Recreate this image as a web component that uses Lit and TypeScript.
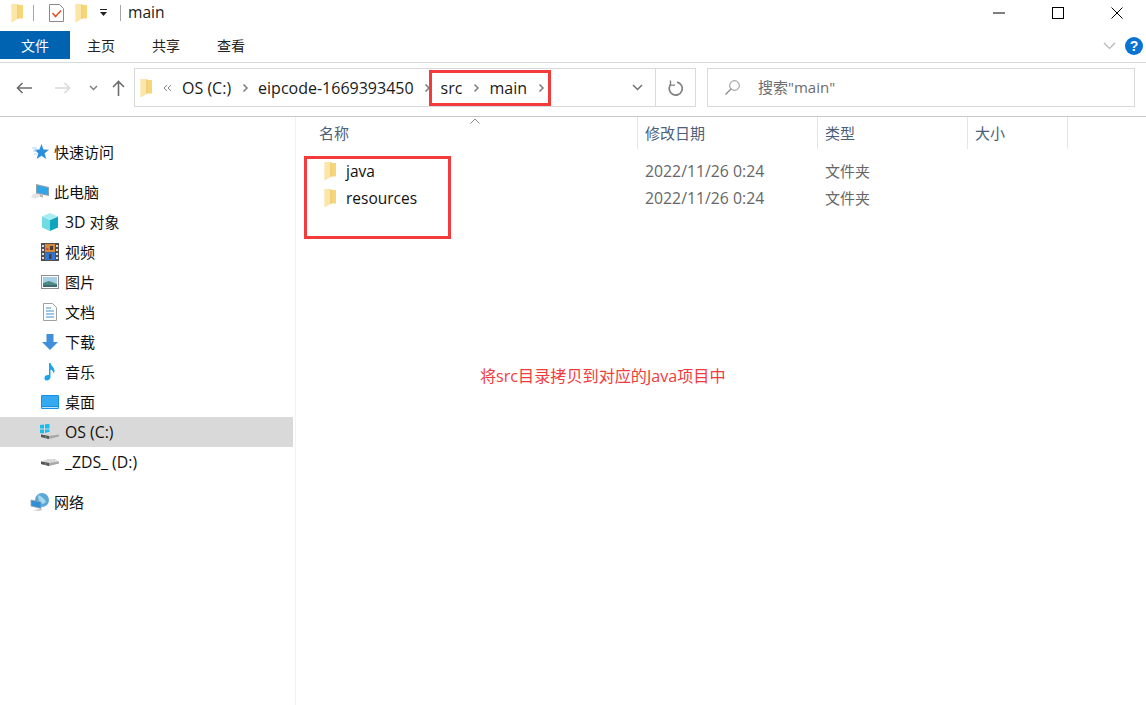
import { LitElement, html, css, svg } from "lit";
import { customElement } from "lit/decorators.js";

const icon = (w: number, h: number, body: unknown, cls = "") =>
  html`<svg class="ic ${cls}" width=${w} height=${h} viewBox="0 0 ${w} ${h}">${body}</svg>`;

const folder = () => html`<svg class="ic" width="12" height="18" viewBox="0 0 12 18">
  <path d="M6 1h6v13.500H6z" fill="#f6d679"/>
  <path d="M0 0h6.500v15L1.500 18H.5L0 17z" fill="#fbe6a8"/>
  <path d="M0 0h1v17H0z" fill="#fdf0c8"/>
  <path d="M6.500 0h.8v15h-.8z" fill="#e6c472"/>
</svg>`;

const drive = svg`<path d="M1 4.500L8 2h7l4 2.500-1 .5-9 2.500z" fill="#d9d9d9"/><path d="M1 4.500L9 6l10-1.500v2L9 9 1 7z" fill="#a8a8a8"/><path d="M1 4.500L9 6v3L1 7z" fill="#555"/><path d="M5 6.500h1.500v1H5z" fill="#5fd06a"/>`;

const sideIcons: Record<string, unknown> = {
  star: icon(18, 16, svg`<path d="M10.500 0l2 5.400 5.500.3-4.400 3.500 1.600 5.800-4.700-3.200-4.800 3.200 1.600-5.800L3 5.800l5.400-.3z" fill="#2a8fdc"/><path d="M1 4h5M2 7h4M3 10h3" stroke="#a9d6f4"/>`),
  pc: icon(20, 17, svg`<path d="M3 10l7-1.500 5 1.500-9 4.500-5-1z" fill="#e4e4e4"/><path d="M6 0l13 3v9L6 9.500z" fill="#8fa1ad"/><path d="M7 1.500l11 2.500v6.800L7 8.500z" fill="#2fa5ea"/><path d="M10 10l3 .5v3l-3-.5z" fill="#bbb"/>`),
  cube: icon(18, 18, svg`<path d="M1 3.500L9 7v11l-8-3.500z" fill="#6fdbe3"/><path d="M9 7l8-3.500v11L9 18z" fill="#12a3bf"/><path d="M1 3.500L9 0l8 3.500L9 7z" fill="#a6ecf0"/>`),
  video: icon(18, 18, svg`<rect width="18" height="18" fill="#4f4f4f"/><rect x="4" y="1" width="10" height="8" fill="#d88a3c"/><rect x="4" y="9.500" width="10" height="7.500" fill="#2f78d8"/><path d="M1 2h2v2H1zM1 6h2v2H1zM1 10h2v2H1zM1 14h2v2H1zM15 2h2v2h-2zM15 6h2v2h-2zM15 10h2v2h-2zM15 14h2v2h-2z" fill="#ddd"/><path d="M9 3h3v4H9zM8 11h2.500v5H8z" fill="#4a3a30"/><path d="M5 5h2.500v2H5z" fill="#c84a3a"/>`),
  pic: icon(18, 14, svg`<rect x=".5" y=".5" width="17" height="13" fill="#fff" stroke="#8f8f8f"/><rect x="2" y="2" width="14" height="10" fill="#a9cfe6"/><path d="M2 8l6-2 8 3v3H2z" fill="#4f8a80"/><path d="M2 10h14v2H2z" fill="#3d6b74"/>`),
  doc: icon(14, 18, svg`<path d="M.5.5h9l4 4v13H.5z" fill="#fff" stroke="#a0a0a0"/><path d="M3 5h5M3 8h8M3 11h8M3 14h8" stroke="#3a8fd8"/>`),
  down: icon(18, 18, svg`<path d="M5.500 1h7v8H17l-8 8-8-8h4.500z" fill="#3f8fdc"/>`),
  music: icon(12, 18, svg`<path d="M5 0h1.500c.5 3 4 4 4 8 0 1-.5 2-1 2.500.2-2-1.500-3.500-3-4V14c0 2-2 3.500-4 3.500S.5 16 .5 14.500 2.500 11.500 5 12z" fill="#17a5ee"/>`),
  desk: icon(18, 14, svg`<rect width="18" height="14" rx="1" fill="#1890e6"/><rect x="1" y="1" width="16" height="10" fill="#35a9f2"/><path d="M1 12.500h16" stroke="#bfe6fb"/>`),
  os: icon(20, 16, svg`<path d="M0 1l4-.6V4.500H0zM5 .3L9.500 0v4.500H5zM0 5.500h4v4L0 9zM5 5.500h4.500V10L5 9.500z" fill="#18bdf0"/><g transform="translate(0 6)">${drive}</g>`),
  hd: icon(20, 11, drive),
  net: icon(20, 18, svg`<circle cx="12" cy="7" r="7" fill="#5aa8d8"/><path d="M8 2c3 1 6 3 8 7l-3 2c-3-1-5-4-5-9z" fill="#a8d8ee"/><path d="M1 7l10 2v6.500L1 13z" fill="#2f90d8" stroke="#8fa4b0" stroke-width=".8"/><path d="M3 17l8-1 2 1-5 1z" fill="#c8c8c8"/>`),
};

const side: any[] = [
  { k: "star", t: html`快速访问`, lv: 0 },
  { gap: true },
  { k: "pc", t: html`此电脑`, lv: 0 },
  { k: "cube", t: html`<span class="l">3D</span> 对象`, lv: 1, lat: true },
  { k: "video", t: html`视频`, lv: 1 },
  { k: "pic", t: html`图片`, lv: 1 },
  { k: "doc", t: html`文档`, lv: 1 },
  { k: "down", t: html`下载`, lv: 1 },
  { k: "music", t: html`音乐`, lv: 1 },
  { k: "desk", t: html`桌面`, lv: 1 },
  { k: "os", t: html`<span class="l">OS (C:)</span>`, lv: 1, sel: true, lat: true },
  { k: "hd", t: html`<span class="l">_ZDS_ (D:)</span>`, lv: 1, lat: true },
  { gap: true },
  { k: "net", t: html`网络`, lv: 0 },
];

const chev = () => icon(7, 10, svg`<path d="M1.500 1.500l3.500 3.500-3.500 3.500" fill="none" stroke="#808080" stroke-width="1.600"/>`, "chev");

@customElement("app-root")
export class AppRoot extends LitElement {
  static styles = css`
    :host {
      display: block; position: relative; width: 1146px; height: 705px; overflow: hidden; background: #fff;
      font-family: "Open Sans", "Noto Sans CJK SC", sans-serif; font-size: 15px; color: #000;
    }
    .ic { display: block; flex: none; }
    .l { font-size: 15.8px; }
    .title { height: 25px; padding-bottom: 6px; display: flex; align-items: center; }
    .vsep { width: 1px; height: 16px; background: #a6a6a6; flex: none; }
    .sp1 { margin-left: 10px; }
    .sp2 { margin-left: 11px; }
    .sp3 { margin-left: 15px; }
    .sp4 { margin-left: 11px; }
    .sp5 { margin-left: 12px; }
    .wname { margin-left: 7px; color: #1a1a1a; font-size: 15.6px; padding-bottom: 2px; }
    .winbtns { margin-left: auto; display: flex; }
    .winbtns > div { width: 59px; height: 25px; display: flex; align-items: center; justify-content: center; }
    .ribbon { height: 31px; display: flex; align-items: flex-start; border-bottom: 1px solid #d9d9d9; font-size: 14px; }
    .tab { height: 28px; display: flex; align-items: center; color: #222; }
    .tab.file { width: 70px; justify-content: center; background: #0063b1; color: #fff; margin-right: 17px; }
    .tab.t { width: 65px; }
    .ribr { margin-left: auto; display: flex; align-items: center; height: 30px; gap: 9px; padding-right: 3px; }
    .nav { height: 48px; padding-top: 5px; display: flex; align-items: flex-start; border-bottom: 1px solid #c8c8c8; }
    .navbtns { display: flex; align-items: center; width: 134px; flex: none; height: 39px; }
    .nb1 { margin-left: 16px; }
    .nb2 { margin-left: 23px; }
    .nb3 { margin-left: 18px; }
    .nb4 { margin-left: 14px; }
    .addr { width: 562px; height: 39px; box-sizing: border-box; border: 1px solid #d9d9d9; display: flex; align-items: center; flex: none; }
    .crumbs { flex: 1; display: flex; align-items: center; padding-left: 5px; color: #1a1a1a; white-space: nowrap; font-size: 16px; }
    .crumbs .lq { margin: 0 10px 0 11px; }
    .crumbs .chev { margin: 0 9.5px 0 10.5px; }
    .addr .dd { width: 39px; padding-left: 3px; box-sizing: border-box; height: 100%; display: flex; align-items: center; justify-content: center; }
    .addr .rf { width: 40px; height: 100%; border-left: 1px solid #d9d9d9; display: flex; align-items: center; justify-content: center; box-sizing: border-box; }
    .search { margin-left: 11px; width: 428px; height: 39px; box-sizing: border-box; border: 1px solid #d9d9d9; display: flex; align-items: center; padding-left: 17px; gap: 18px; color: #6d6d6d; flex: none; }
    .search span { padding-bottom: 2px; }
    .body { display: flex; height: 588px; }
    .sidebar { width: 296px; box-sizing: border-box; padding-top: 20px; flex: none; border-right: 1px solid #f2f2f2; }
    .srow { height: 30px; width: 293px; box-sizing: border-box; display: flex; align-items: center; color: #111; white-space: nowrap; }
    .srow.sel { background: #d9d9d9; }
    .srow .iw { width: 24px; margin-right: 3px; display: flex; justify-content: center; flex: none; }
    .srow .tx { padding-bottom: 2px; }
    .srow .tx.lat { padding-bottom: 0; }
    .srow.l0 { padding-left: 28px; }
    .srow.l0 .iw { margin-right: 2px; }
    .srow.l1 { padding-left: 38px; }
    .sgap { height: 10px; }
    .main { flex: 1; position: relative; }
    .head { height: 32px; display: grid; grid-template-columns: 342px 180px 150px 100px; color: #4c607a; position: relative; }
    .head > div { border-right: 1px solid #e5e5e5; display: flex; align-items: center; padding-left: 7px; padding-bottom: 2px; box-sizing: border-box; }
    .head > div.hn { padding-left: 23px; }
    .head > .sort { position: absolute; left: 174px; top: 1px; }
    .rows { padding-top: 8px; }
    .row { height: 27px; display: grid; grid-template-columns: 341px 180px 150px 100px; align-items: center; }
    .row .n { display: flex; align-items: center; padding-left: 28px; gap: 10px; color: #111; font-size: 15.5px; }
    .row .d, .row .y { padding-left: 8px; color: #666; }
    .row .d { font-size: 15.8px; }
    .mark { position: absolute; border: 3px solid #f33b3b; box-sizing: border-box; }
    .m1 { left: 429px; top: 70px; width: 122px; height: 36px; }
    .m2 { left: 304px; top: 156px; width: 147px; height: 83px; }
    .note { position: absolute; left: 480px; top: 363px; color: #f33b3b; white-space: nowrap; font-size: 16.13px; }
  `;

  render() {
    const files = ["java", "resources"];
    return html`
      <div class="title">
        <span class="sp2">${folder()}</span>
        <span class="vsep sp1"></span>
        <span class="sp3">${icon(15, 18, svg`<path d="M.5.5h10l4 4v13H.5z" fill="#fff" stroke="#8a8a8a"/><path d="M3.500 9l3 3.500 5.500-6" fill="none" stroke="#e2542a" stroke-width="1.600"/>`)}</span>
        <span class="sp4">${folder()}</span>
        <span class="sp5">${icon(9, 7, svg`<path d="M1 .5h7" stroke="#222"/><path d="M1 3h7L4.500 7z" fill="#222"/>`)}</span>
        <span class="vsep sp5"></span>
        <span class="wname">main</span>
        <div class="winbtns">
          <div>${icon(12, 2, svg`<path d="M0 1h12" stroke="#000"/>`)}</div>
          <div>${icon(12, 12, svg`<rect x=".5" y=".5" width="11" height="11" fill="none" stroke="#000"/>`)}</div>
          <div>${icon(12, 12, svg`<path d="M.5.500l11 11M11.500.500l-11 11" stroke="#000"/>`)}</div>
        </div>
      </div>
      <div class="ribbon">
        <div class="tab file">文件</div>
        <div class="tab t">主页</div>
        <div class="tab t">共享</div>
        <div class="tab t">查看</div>
        <div class="ribr">
          ${icon(13, 8, svg`<path d="M1 1l5.500 5.500L12 1" fill="none" stroke="#b5b5b5" stroke-width="1.200"/>`)}
          ${icon(18, 18, svg`<circle cx="9" cy="9" r="9" fill="#0a73d2"/><text x="9" y="14" text-anchor="middle" font-size="14" font-weight="700" fill="#fff" font-family="Liberation Sans">?</text>`)}
        </div>
      </div>
      <div class="nav">
        <div class="navbtns">
          <span class="nb1">${icon(16, 12, svg`<path d="M16 6H1.500M6.500 1l-5 5 5 5" fill="none" stroke="#6e6e6e" stroke-width="1.600"/>`)}</span>
          <span class="nb2">${icon(16, 12, svg`<path d="M0 6h14.500M9.500 1l5 5-5 5" fill="none" stroke="#d8d8d8" stroke-width="1.600"/>`)}</span>
          <span class="nb3">${icon(9, 6, svg`<path d="M1 1l3.500 3.500L8 1" fill="none" stroke="#808080" stroke-width="1.500"/>`)}</span>
          <span class="nb4">${icon(13, 16, svg`<path d="M6.500 16V1.500M1 7l5.500-5.500L12 7" fill="none" stroke="#6e6e6e" stroke-width="1.600"/>`)}</span>
        </div>
        <div class="addr">
          <div class="crumbs">
            ${folder()}
            <span class="lq">${icon(9, 8, svg`<path d="M4 1L1 4l3 3M8 1L5 4l3 3" fill="none" stroke="#888"/>`)}</span>
            <span>OS (C:)</span>${chev()}
            <span>eipcode-1669393450</span>${chev()}
            <span>src</span>${chev()}
            <span>main</span>${chev()}
          </div>
          <div class="dd">${icon(11, 7, svg`<path d="M1 1l4.500 4.500L10 1" fill="none" stroke="#707070" stroke-width="1.500"/>`)}</div>
          <div class="rf">${icon(15, 16, svg`<path d="M9 2.200A6.500 6.500 0 1 1 2.600 4.600" fill="none" stroke="#808080" stroke-width="1.700"/><path d="M2.500.5v4.600h4.600" fill="none" stroke="#808080" stroke-width="1.400"/>`)}</div>
        </div>
        <div class="search">
          ${icon(15, 15, svg`<circle cx="9.500" cy="5.500" r="4.800" fill="none" stroke="#8a8a8a"/><path d="M6 9L.5 14.500" stroke="#8a8a8a" stroke-width="1.200"/>`)}
          <span>搜索"main"</span>
        </div>
      </div>
      <div class="body">
        <div class="sidebar">
          ${side.map((s) => s.gap ? html`<div class="sgap"></div>` : html`
            <div class="srow l${s.lv} ${s.sel ? "sel" : ""}">
              <span class="iw">${sideIcons[s.k]}</span><span class="tx ${s.lat ? "lat" : ""}">${s.t}</span>
            </div>`)}
        </div>
        <div class="main">
          <div class="head">
            <div class="hn">名称</div><div>修改日期</div><div>类型</div><div>大小</div>
            <span class="sort">${icon(10, 6, svg`<path d="M.5 5.500L5 1l4.500 4.500" fill="none" stroke="#888"/>`)}</span>
          </div>
          <div class="rows">
            ${files.map((f) => html`
              <div class="row">
                <div class="n">${folder()}<span>${f}</span></div>
                <div class="d">2022/11/26 0:24</div>
                <div class="y">文件夹</div>
              </div>`)}
          </div>
        </div>
      </div>
      <div class="mark m1"></div>
      <div class="mark m2"></div>
      <div class="note">将src目录拷贝到对应的Java项目中</div>
    `;
  }
}
